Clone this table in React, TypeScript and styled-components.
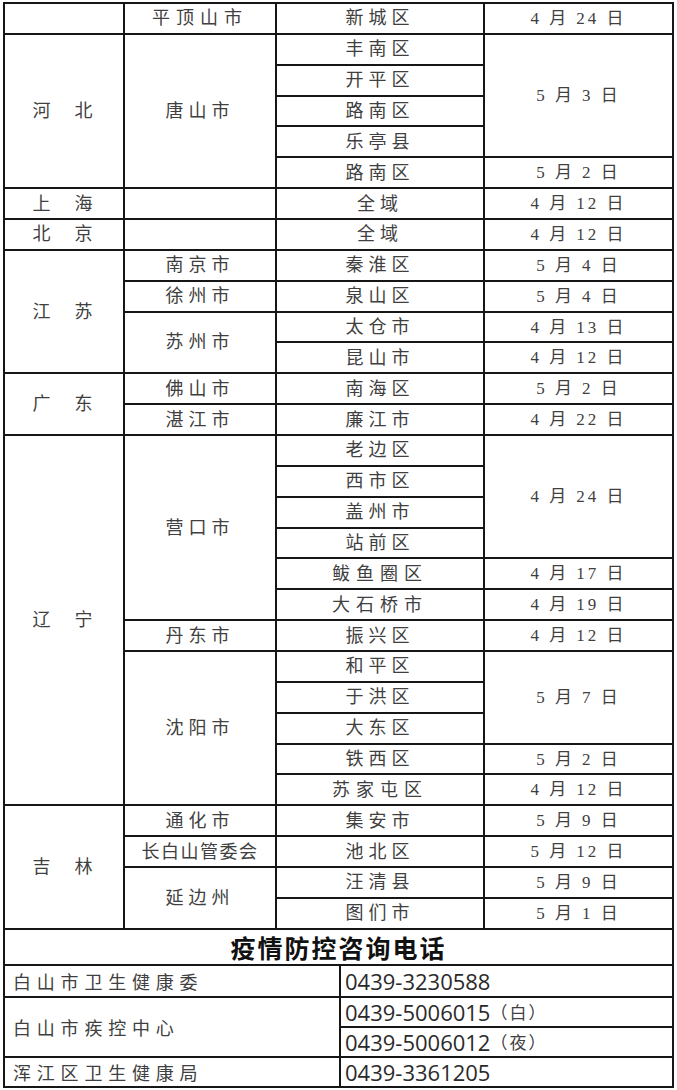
import React from "react";
import styled, { createGlobalStyle } from "styled-components";

const Global = createGlobalStyle`
  html, body { margin: 0; padding: 0; background: #fff; }
  body { font-family: "Liberation Serif", "Noto Sans CJK SC", serif; }
`;

const Sheet = styled.div`
  box-sizing: border-box;
  margin: 2px 0 0 3px;
  width: 671px;
  padding: 2px;
  background: #161616;
  display: flex;
  flex-direction: column;
  gap: 2px;
`;

const RegionGrid = styled.div`
  display: grid;
  grid-template-columns: 118px 150px 206px 187px;
  grid-auto-rows: 28.87px;
  gap: 2px;
`;

const Cell = styled.div<{ $rows?: number; $spacing?: number; $size?: number }>`
  grid-row: span ${(p) => p.$rows ?? 1};
  background: #fff;
  display: flex;
  align-items: center;
  justify-content: center;
  font-family: "Liberation Serif", "Noto Sans CJK SC", serif;
  font-size: ${(p) => p.$size ?? 18}px;
  line-height: 1;
  letter-spacing: ${(p) => p.$spacing ?? 5}px;
  color: #404040;
  white-space: pre;
`;

const TitleCell = styled.div`
  background: #fff;
  height: 34px;
  display: flex;
  align-items: center;
  justify-content: center;
  font-family: "Noto Sans CJK SC", sans-serif;
  font-weight: 700;
  font-size: 25px;
  letter-spacing: 2px;
  color: #111;
`;

const ContactGrid = styled.div`
  display: grid;
  grid-template-columns: 334px 331px;
  grid-template-rows: 30px 28px 28px 28px;
  gap: 2px;
`;

const ContactName = styled.div<{ $rows?: number }>`
  grid-row: span ${(p) => p.$rows ?? 1};
  background: #fff;
  display: flex;
  align-items: center;
  padding-left: 8px;
  font-family: "Noto Sans CJK SC", sans-serif;
  font-size: 18px;
  letter-spacing: 5.8px;
  color: #404040;
`;

const Phone = styled.div`
  background: #fff;
  display: flex;
  align-items: center;
  padding-left: 4px;
  font-family: "Open Sans", "Noto Sans CJK SC", sans-serif;
  font-size: 22px;
  color: #2a2a2a;
`;

const Paren = styled.span`
  font-family: "Noto Sans CJK SC", sans-serif;
  font-size: 17px;
  letter-spacing: 2px;
  color: #404040;
`;

type C = { t: string; r?: number; s?: number; z?: number };
const P = (t: string, r?: number): C => ({ t, r, s: 3 });
const N = (t: string, r?: number): C => ({ t, r, s: t.length > 3 ? 6 : 5 });
const D = (t: string, r?: number): C => ({ t, r, s: 3, z: 17 });

const cells: C[] = [
  N(""), N("平顶山市", 1), N("新城区"), D("4 月 24 日"),
  P("河　北", 5), N("唐山市", 5), N("丰南区"), D("5 月 3 日", 4),
  N("开平区"), N("路南区"), N("乐亭县"),
  N("路南区"), D("5 月 2 日"),
  P("上　海"), N(""), N("全域"), D("4 月 12 日"),
  P("北　京"), N(""), N("全域"), D("4 月 12 日"),
  P("江　苏", 4), N("南京市"), N("秦淮区"), D("5 月 4 日"),
  N("徐州市"), N("泉山区"), D("5 月 4 日"),
  N("苏州市", 2), N("太仓市"), D("4 月 13 日"),
  N("昆山市"), D("4 月 12 日"),
  P("广　东", 2), N("佛山市"), N("南海区"), D("5 月 2 日"),
  N("湛江市"), N("廉江市"), D("4 月 22 日"),
  P("辽　宁", 12), N("营口市", 6), N("老边区"), D("4 月 24 日", 4),
  N("西市区"), N("盖州市"), N("站前区"),
  N("鲅鱼圈区"), D("4 月 17 日"),
  N("大石桥市"), D("4 月 19 日"),
  N("丹东市"), N("振兴区"), D("4 月 12 日"),
  N("沈阳市", 5), N("和平区"), D("5 月 7 日", 3),
  N("于洪区"), N("大东区"),
  N("铁西区"), D("5 月 2 日"),
  N("苏家屯区"), D("4 月 12 日"),
  P("吉　林", 4), N("通化市"), N("集安市"), D("5 月 9 日"),
  { t: "长白山管委会", s: 1.5 }, N("池北区"), D("5 月 12 日"),
  N("延边州", 2), N("汪清县"), D("5 月 9 日"),
  N("图们市"), D("5 月 1 日"),
];

export default function App() {
  return (
    <>
      <Global />
      <Sheet>
        <RegionGrid>
          {cells.map((c, i) => (
            <Cell key={i} $rows={c.r} $spacing={c.s} $size={c.z}>
              {c.t}
            </Cell>
          ))}
        </RegionGrid>
        <TitleCell>疫情防控咨询电话</TitleCell>
        <ContactGrid>
          <ContactName>白山市卫生健康委</ContactName>
          <Phone>0439-3230588</Phone>
          <ContactName $rows={2}>白山市疾控中心</ContactName>
          <Phone>
            0439-5006015<Paren>（白）</Paren>
          </Phone>
          <Phone>
            0439-5006012<Paren>（夜）</Paren>
          </Phone>
          <ContactName>浑江区卫生健康局</ContactName>
          <Phone>0439-3361205</Phone>
        </ContactGrid>
      </Sheet>
    </>
  );
}
